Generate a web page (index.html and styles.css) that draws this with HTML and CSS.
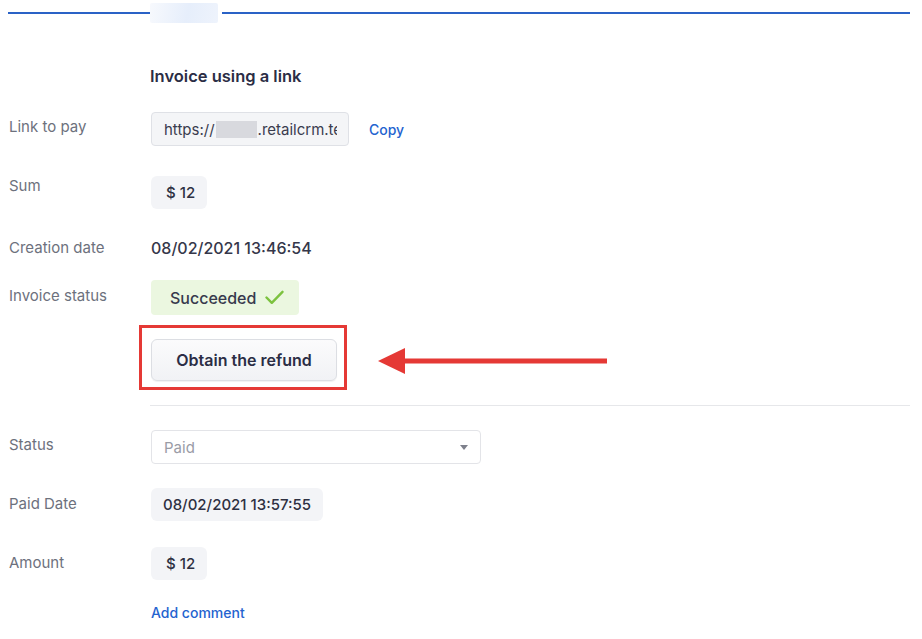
FILE: index.html
```html
<!DOCTYPE html>
<html>
<head>
<meta charset="utf-8">
<link rel="stylesheet" href="styles.css">
</head>
<body>
<div class="page">
  <div class="topbar">
    <div class="tline tline-left"></div>
    <div class="blur-tab"></div>
    <div class="tline tline-right"></div>
  </div>

  <div class="content">
    <h2 class="heading">Invoice using a link</h2>

    <div class="row row-link">
      <div class="label">Link to pay</div>
      <div class="value value-inline">
        <div class="link-input"><div class="link-clip"><span>https://</span><span class="redact"></span><span class="link-rest">.retailcrm.te</span></div></div>
        <a class="link copy">Copy</a>
      </div>
    </div>

    <div class="row row-sum">
      <div class="label">Sum</div>
      <div class="value"><span class="pill pill-sum">$ 12</span></div>
    </div>

    <div class="row row-date">
      <div class="label">Creation date</div>
      <div class="value plain">08/02/2021 13:46:54</div>
    </div>

    <div class="row row-status">
      <div class="label">Invoice status</div>
      <div class="value">
        <span class="badge-success">Succeeded
          <svg class="check" width="19" height="15" viewBox="0 0 19 15"><path d="M1.5 7.5 L6.8 12.8 L17.5 1.8" fill="none" stroke="#7cc23f" stroke-width="2.4" stroke-linecap="round" stroke-linejoin="round"/></svg>
        </span>
      </div>
    </div>

    <div class="row row-refund">
      <div class="label"></div>
      <div class="value refund-cell">
        <div class="highlight">
          <button class="btn-refund">Obtain the refund</button>
        </div>
        <svg class="arrow" width="232" height="30" viewBox="0 0 232 30"><polygon points="0,14 27,1 27,27" fill="#e53935"/><rect x="24" y="11.5" width="205" height="5" fill="#e53935"/></svg>
      </div>
    </div>

    <div class="separator"></div>

    <div class="row row-pstatus">
      <div class="label">Status</div>
      <div class="value">
        <div class="select"><span>Paid</span><span class="caret"></span></div>
      </div>
    </div>

    <div class="row row-paid">
      <div class="label">Paid Date</div>
      <div class="value"><span class="pill pill-date">08/02/2021 13:57:55</span></div>
    </div>

    <div class="row row-amount">
      <div class="label">Amount</div>
      <div class="value"><span class="pill pill-sum">$ 12</span></div>
    </div>

    <div class="row row-comment">
      <div class="label"></div>
      <div class="value"><a class="link">Add comment</a></div>
    </div>
  </div>
</div>
</body>
</html>
```

FILE: styles.css
```css
* { box-sizing: border-box; }
html, body { margin: 0; padding: 0; background: #fff; }
body {
  font-family: Inter, "Noto Sans", "Liberation Sans", sans-serif;
  color: #2e3042;
  width: 922px;
  height: 639px;
  overflow: hidden;
}
.page { position: relative; }

.topbar {
  display: flex;
  align-items: center;
  height: 24px;
  padding-top: 2px;
}
.tline { height: 2px; background: #2a62c6; }
.tline-left { margin-left: 8px; width: 142px; }
.blur-tab {
  width: 68px;
  height: 20px;
  background: linear-gradient(100deg, #f7f9fd 0%, #e6eefb 55%, #eef3fc 100%);
  border-radius: 2px;
  margin-right: 4px;
}
.tline-right { width: 688px; }

.content { padding-left: 9px; }

.heading {
  margin: 42px 0 26px 141px;
  font-size: 16.5px;
  line-height: 20px;
  font-weight: 600;
  color: #2b2d45;
}

.row {
  display: grid;
  grid-template-columns: 142px 1fr;
  align-items: start;
}
.label {
  font-size: 15px;
  line-height: 20px;
  color: #6d717d;
}
.value { font-size: 15px; }
.value-inline { display: flex; align-items: center; }

.row-link .label { padding-top: 5px; }
.link-input {
  width: 198px;
  height: 34px;
  background: #f4f5f7;
  border: 1px solid #dfe1e6;
  border-radius: 4px;
  padding: 0 0 0 12px;
  display: flex;
  align-items: center;
}
.link-clip {
  width: 173px;
  display: flex;
  align-items: center;
  font-size: 15px;
  color: #3a3c4e;
  white-space: nowrap;
  overflow: hidden;
}
.link-rest { min-width: 0; overflow: hidden; }
.redact {
  display: inline-block;
  flex: none;
  width: 41px;
  height: 17px;
  background: #d8d9de;
  margin: 0 1px;
}
.link {
  color: #2463cf;
  font-weight: 500;
  font-size: 14px;
  text-decoration: none;
}
.copy { margin-left: 20px; }

.row-sum { margin-top: 30px; }
.pill {
  display: inline-flex;
  align-items: center;
  height: 33px;
  background: #f3f4f7;
  border-radius: 6px;
  font-size: 15px;
  font-weight: 500;
  color: #2e3042;
}
.pill-sum { width: 56px; padding-left: 15px; }
.pill-date { width: 172px; padding-left: 12px; font-size: 15px; }

.row-date { margin-top: 29px; }
.plain { font-size: 16px; line-height: 20px; font-weight: 500; color: #35374a; }

.row-status { margin-top: 22px; }
.row-status .label { padding-top: 6px; }
.badge-success {
  display: inline-flex;
  align-items: center;
  width: 148px;
  height: 35px;
  padding-left: 19px;
  background: #ebf7e0;
  border-radius: 4px;
  font-size: 16px;
  font-weight: 500;
  color: #373a4d;
}
.check { margin-left: 9px; }

.row-refund { margin-top: 10px; }
.refund-cell { position: relative; }
.highlight {
  display: inline-block;
  margin-left: -12px;
  border: 3px solid #e53935;
  padding: 11px 7px 6px 9px;
}
.btn-refund {
  display: block;
  width: 186px;
  height: 42px;
  border: 1px solid #dcdee3;
  border-radius: 6px;
  background: linear-gradient(#fbfbfc, #f1f2f5);
  box-shadow: 0 1px 1px rgba(0,0,0,0.06);
  font-family: Inter, "Noto Sans", "Liberation Sans", sans-serif;
  font-size: 16px;
  font-weight: 600;
  color: #2b2d45;
  padding: 0;
}
.arrow { position: absolute; left: 227px; top: 22px; }

.separator {
  margin: 15px 0 0 141px;
  height: 1px;
  width: 760px;
  background: #e6e7ea;
}

.row-pstatus { margin-top: 24px; }
.row-pstatus .label { padding-top: 5px; }
.select {
  width: 330px;
  height: 34px;
  border: 1px solid #e3e4e8;
  border-radius: 4px;
  background: #fff;
  display: flex;
  align-items: center;
  justify-content: space-between;
  padding: 0 12px 0 12px;
  font-size: 15px;
  color: #9a9ca6;
}
.caret {
  width: 0; height: 0;
  border-left: 4px solid transparent;
  border-right: 4px solid transparent;
  border-top: 5px solid #7e808c;
}

.row-paid { margin-top: 24px; }
.row-paid .label { padding-top: 6px; }
.row-amount { margin-top: 26px; }
.row-amount .label { padding-top: 6px; }
.row-comment { margin-top: 23px; }
.row-comment .value { line-height: 20px; }
```
